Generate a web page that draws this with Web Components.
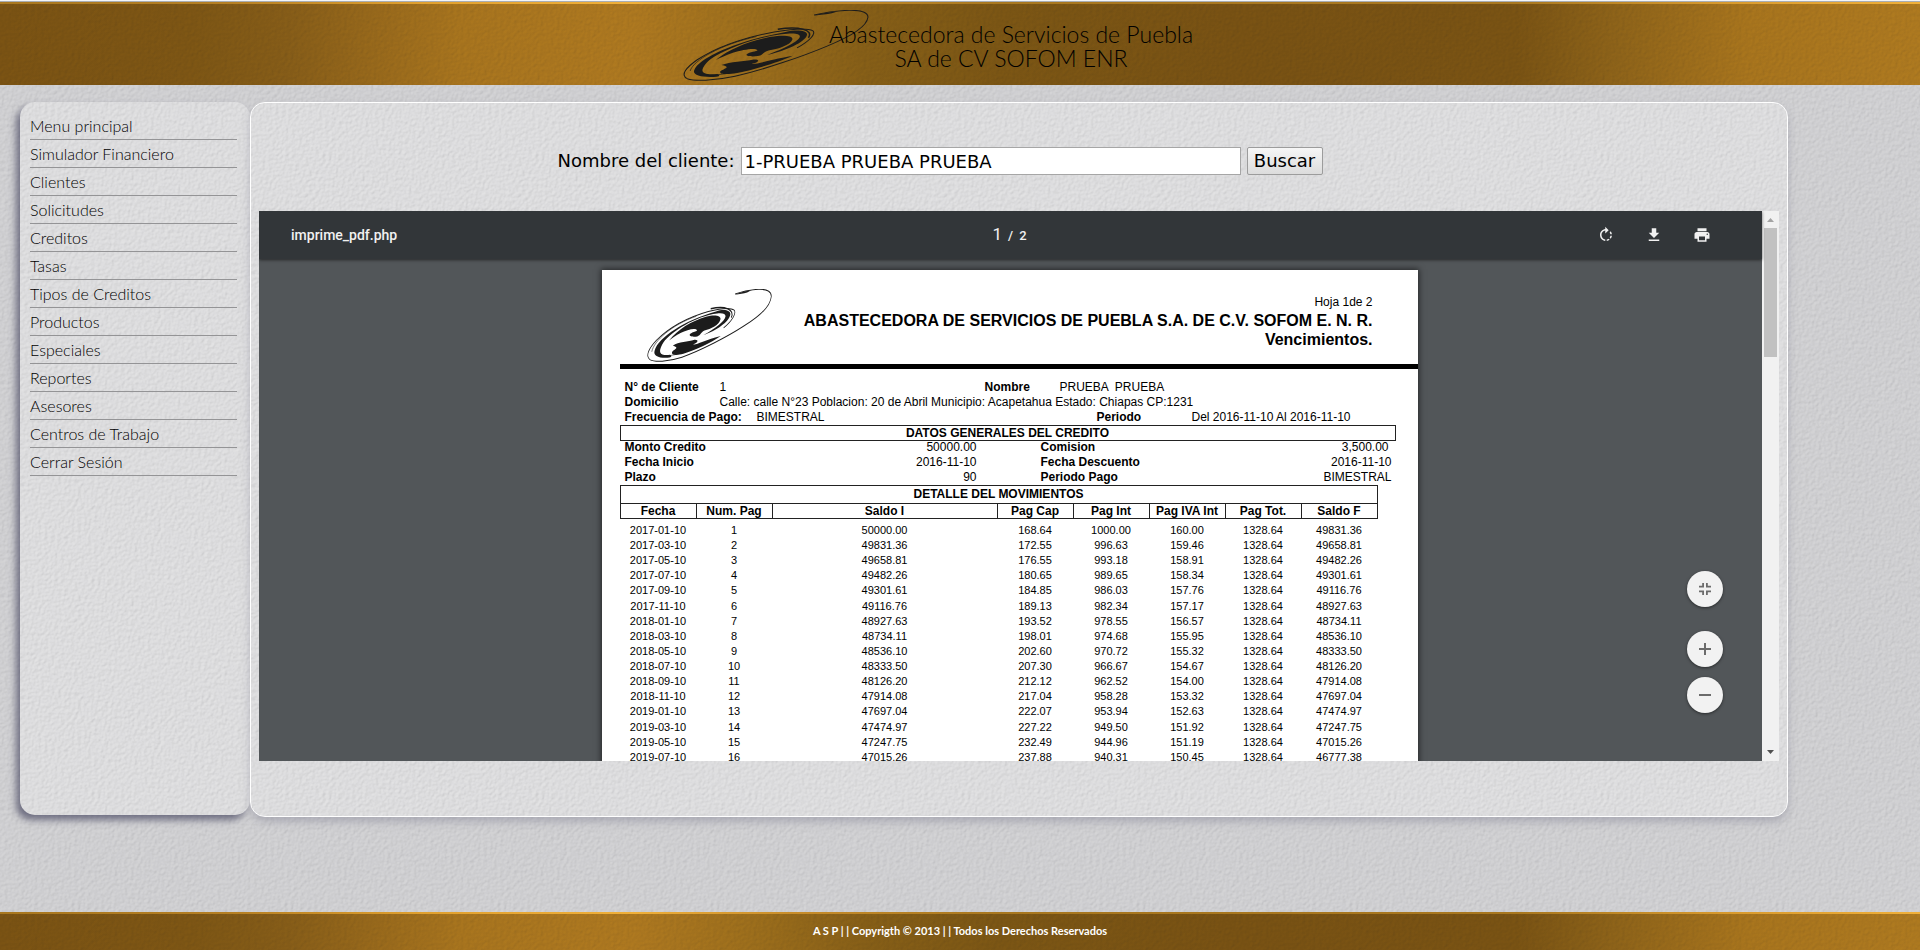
<!DOCTYPE html>
<html lang="es">
<head>
<meta charset="utf-8">
<title>Abastecedora de Servicios de Puebla</title>
<style>
  html {
    --texture: url("data:image/svg+xml,%3Csvg xmlns='http://www.w3.org/2000/svg' width='213' height='213'%3E%3Cfilter id='f' x='0' y='0' width='100%25' height='100%25' color-interpolation-filters='sRGB'%3E%3CfeTurbulence type='fractalNoise' baseFrequency='.3' numOctaves='3' seed='4' stitchTiles='stitch'/%3E%3CfeDiffuseLighting surfaceScale='1.2' lighting-color='%23fff'%3E%3CfeDistantLight azimuth='225' elevation='50'/%3E%3C/feDiffuseLighting%3E%3CfeColorMatrix values='0 0 0 0 .05 0 0 0 0 .05 0 0 0 0 .1 -.16 0 0 0 .15'/%3E%3C/filter%3E%3Crect width='213' height='213' filter='url(%23f)'/%3E%3C/svg%3E");
    --gold: linear-gradient(90deg, #7c5413 0%, #7f5714 10%, #885e18 15%, #98691b 19%, #aa761e 24%, #b07a20 33%, #9f701c 39%, #886017 45%, #7d5714 52%, #7a5313 64%, #7b5413 79%, #8f6419 84%, #aa761d 91%, #b07b20 100%);
    --gold-line: linear-gradient(90deg, #a8771f 0%, #b57f23 12%, #e0a02f 22%, #f0b03a 33%, #c98e2b 41%, #a8771f 52%, #a8771f 79%, #d89a2e 90%, #f0b03a 100%);
    --gothic: Lato, "Century Gothic", sans-serif;
  }
  body {
    margin: 0;
    min-height: 100vh;
    display: flex;
    flex-direction: column;
    background: var(--texture) #d4d4d6;
    font-family: var(--gothic);
    color: #000;
  }
  .layout { display: flex; align-items: flex-start; padding: 17px 132px 17px 20px; }
  side-menu { flex: 0 0 230px; }
  main { flex: 1; min-width: 0; }
</style>
</head>
<body>
<app-header>
  <span slot="title">Abastecedora de Servicios de Puebla<br>SA de CV SOFOM ENR</span>
</app-header>
<div class="layout">
  <side-menu>
    <a href="#">Menu principal</a>
    <a href="#">Simulador Financiero</a>
    <a href="#">Clientes</a>
    <a href="#">Solicitudes</a>
    <a href="#">Creditos</a>
    <a href="#">Tasas</a>
    <a href="#">Tipos de Creditos</a>
    <a href="#">Productos</a>
    <a href="#">Especiales</a>
    <a href="#">Reportes</a>
    <a href="#">Asesores</a>
    <a href="#">Centros de Trabajo</a>
    <a href="#">Cerrar Sesión</a>
  </side-menu>
  <main>
    <content-panel>
      <client-search></client-search>
      <pdf-viewer><credit-report></credit-report></pdf-viewer>
    </content-panel>
  </main>
</div>
<app-footer>A S P | | Copyrigth © 2013 | | Todos los Derechos Reservados</app-footer>

<script>
const define = (name, html, setup) => {
  const tpl = document.createElement('template');
  tpl.innerHTML = html;
  customElements.define(name, class extends HTMLElement {
    constructor() {
      super();
      this.attachShadow({ mode: 'open' }).append(tpl.content.cloneNode(true));
      if (setup) setup(this.shadowRoot);
    }
  });
};

define('swirl-logo', `
<style>:host{display:block} svg{display:block;width:100%;height:100%}</style>
<svg viewBox="64 28 522 214" preserveAspectRatio="none" aria-hidden="true" fill="#1c1c1c">
  <path d="M432 43C460 36 490 30 530 29C566 28 584 36 583 50C580 78 530 110 470 136C400 168 290 208 210 228C150 242 96 243 76 235C56 224 72 202 104 178C158 140 240 110 320 94C370 85 414 82 428 90C438 98 422 120 384 142" fill="none" stroke="#1c1c1c" stroke-width="3"/>
  <path d="M431 45C452 42 466 42 482 38L500 32C474 35 450 38 431 45Z"/>
  <path d="M352 94C384 86 414 90 412 103C408 124 350 152 300 163C346 146 390 122 392 108C392 98 374 97 340 101C250 114 150 160 128 190C108 216 120 224 160 221C168 224 168 228 158 229C116 232 88 224 96 208C112 170 220 120 352 94Z"/>
  <path d="M330 86C390 76 432 88 416 112" fill="none" stroke="#1c1c1c" stroke-width="4"/>
  <path d="M156 179C196 144 250 122 310 109C342 103 374 104 371 117C366 134 330 146 304 150C286 156 290 164 274 167C258 169 238 168 243 161C250 154 272 153 273 149C268 141 232 147 204 157C186 164 168 172 156 179Z"/>
  <path d="M172 194C196 183 236 183 262 177C282 176 278 186 256 190C270 193 298 180 372 166C332 186 262 208 216 218C192 222 168 224 168 214C170 208 190 204 186 199C182 195 176 196 172 194Z"/>
  <path d="M130 226C200 222 270 202 330 180" fill="none" stroke="#1c1c1c" stroke-width="2"/>
  <path d="M84 212C92 180 170 132 270 108" fill="none" stroke="#1c1c1c" stroke-width="2"/>
</svg>`);

define('app-header', `
<style>
  :host{display:block;border-top:1px solid #f4f5f7}
  header{display:flex;justify-content:center;box-sizing:border-box;height:84px;border-top:1px solid #a9adb3;
    padding:8px 44px 0 0;background:var(--gold-line) 0 0/100% 2px no-repeat,var(--texture),var(--gold)}
  swirl-logo{width:186px;height:71px;margin-right:-40px}
  h1{margin:0;padding-top:12px;font:300 23px/24px var(--gothic);text-align:center;position:relative;white-space:nowrap}
</style>
<header><swirl-logo></swirl-logo><h1><slot name="title"></slot></h1></header>`);

define('side-menu', `
<style>
  :host{display:block}
  nav{box-sizing:border-box;min-height:713px;padding:10px;border-radius:15px;background:var(--texture) #e2e2e3;
    box-shadow:-4px 5px 7px #505068c0}
  ::slotted(a){display:block;margin-right:3px;height:27px;border-bottom:1px solid #949496;
    font:300 16px/27px var(--gothic);color:#000;text-decoration:none}
</style>
<nav><slot></slot></nav>`);

define('content-panel', `
<style>
  :host{display:block;box-sizing:border-box;padding:0 8px 55px;border:1px solid #fff;border-radius:15px;
    background:var(--texture) padding-box #e2e2e3;box-shadow:0 5px 10px -1px #8a8a9a90}
</style>
<slot></slot>`);

define('client-search', `
<style>
  :host{display:block}
  form{display:flex;justify-content:center;gap:6px;padding:44px 158px 36px 0;font:18px/28px "DejaVu Sans",Verdana,sans-serif}
  input,button{box-sizing:border-box;height:28px;font:inherit;line-height:24px;color:#000}
  input{width:500px;padding:0 3px;border:1px solid #a6a6a6;background:#fff}
  button{width:76px;padding:0;border:1px solid #9c9c9c;border-radius:2px;background:linear-gradient(#f6f6f6,#dcdcdc)}
</style>
<form onsubmit="return false">
  <label for="cliente">Nombre del cliente:</label>
  <input id="cliente" type="text" value="1-PRUEBA PRUEBA PRUEBA">
  <button type="submit">Buscar</button>
</form>`);

define('pdf-viewer', `
<style>
  :host{display:flex;height:550px;overflow:hidden}
  .view{flex:1;display:flex;flex-direction:column;min-width:0;background:#525659;position:relative}
  .bar{box-sizing:border-box;flex:0 0 48px;display:grid;grid-template-columns:1fr auto 1fr;align-items:center;
    padding:0 34px 0 32px;background:#323639;color:#f1f1f1;font:500 14px/20px Roboto,sans-serif;
    box-shadow:0 1px 3px #0000008c;z-index:1}
  .page{display:flex;align-items:baseline;gap:6px;font-size:13px}
  .page b{font-weight:400;font-size:17px}
  .tools{display:flex;justify-content:flex-end;gap:16px;padding-right:10px}
  .tools button{width:32px;height:32px;padding:7px;border:0;background:none;color:#f1f1f1}
  svg{display:block;width:18px;height:18px;fill:currentColor}
  .canvas{flex:1;min-height:0;overflow:hidden;display:flex;justify-content:center;align-items:flex-start;padding:11px 2px 0 0}
  .zoom{position:absolute;right:39px;bottom:48px;display:flex;flex-direction:column;gap:10px}
  .zoom button{width:36px;height:36px;padding:9px;border:0;border-radius:50%;background:#f2f2f2;color:#6c6c6c;
    box-shadow:0 1px 3px #00000080}
  .zoom .fit{margin-bottom:14px}
  .scroll{flex:0 0 17px;display:flex;flex-direction:column;align-items:center;background:#f1f1f1}
  .scroll svg{width:17px;height:17px}
  .thumb{width:13px;height:129px;background:#c1c1c1;margin-bottom:auto}
</style>
<div class="view">
  <div class="bar">
    <span>imprime_pdf.php</span>
    <span class="page"><b>1</b><span>/</span><span>2</span></span>
    <span class="tools">
      <button aria-label="Girar"><svg viewBox="0 0 24 24"><path d="M15.55 5.55L11 1v3.07C7.06 4.56 4 7.92 4 12s3.05 7.44 7 7.93v-2.02c-2.84-.48-5-2.94-5-5.91s2.16-5.43 5-5.91V10l4.550-4.450zM19.930 11c-.17-1.390-.72-2.730-1.620-3.890l-1.420 1.420c.54.75.88 1.600 1.020 2.470h2.020zM13 17.900v2.020c1.390-.17 2.740-.71 3.900-1.610l-1.440-1.440c-.75.54-1.590.89-2.460 1.030zm3.890-2.420l1.420 1.410c.9-1.160 1.450-2.500 1.620-3.890h-2.020c-.14.87-.48 1.720-1.020 2.480z"/></svg></button>
      <button aria-label="Descargar"><svg viewBox="0 0 24 24"><path d="M19 9h-4V3H9v6H5l7 7 7-7zM5 18v2h14v-2H5z"/></svg></button>
      <button aria-label="Imprimir"><svg viewBox="0 0 24 24"><path d="M19 8H5c-1.660 0-3 1.340-3 3v6h4v4h12v-4h4v-6c0-1.660-1.340-3-3-3zm-3 11H8v-5h8v5zm3-7c-.55 0-1-.45-1-1s.45-1 1-1 1 .45 1 1-.45 1-1 1zm-1-9H6v4h12V3z"/></svg></button>
    </span>
  </div>
  <div class="canvas"><slot></slot></div>
  <div class="zoom">
    <button class="fit" aria-label="Ajustar"><svg viewBox="0 0 18 18"><path d="M3 10.500h5V15H6.200v-2.700H3zM6.200 3H8v4.500H3V5.700h3.200zM10 10.500h5v1.800h-3.200V15H10zM11.800 5.700H15v1.800h-5V3h1.800z"/></svg></button>
    <button aria-label="Acercar"><svg viewBox="0 0 18 18"><path d="M8 3h2v5h5v2h-5v5H8v-5H3V8h5z"/></svg></button>
    <button aria-label="Alejar"><svg viewBox="0 0 18 18"><path d="M3 8h12v2H3z"/></svg></button>
  </div>
</div>
<div class="scroll">
  <svg viewBox="0 0 17 17" color="#a3a3a3"><path d="M5 11l3.500-4 3.500 4z"/></svg>
  <div class="thumb"></div>
  <svg viewBox="0 0 17 17" color="#505050"><path d="M5 6h7l-3.500 4z"/></svg>
</div>`);

const rows = `2017-01-10 1 50000.00 168.64 1000.00 160.00 1328.64 49831.36
2017-03-10 2 49831.36 172.55 996.63 159.46 1328.64 49658.81
2017-05-10 3 49658.81 176.55 993.18 158.91 1328.64 49482.26
2017-07-10 4 49482.26 180.65 989.65 158.34 1328.64 49301.61
2017-09-10 5 49301.61 184.85 986.03 157.76 1328.64 49116.76
2017-11-10 6 49116.76 189.13 982.34 157.17 1328.64 48927.63
2018-01-10 7 48927.63 193.52 978.55 156.57 1328.64 48734.11
2018-03-10 8 48734.11 198.01 974.68 155.95 1328.64 48536.10
2018-05-10 9 48536.10 202.60 970.72 155.32 1328.64 48333.50
2018-07-10 10 48333.50 207.30 966.67 154.67 1328.64 48126.20
2018-09-10 11 48126.20 212.12 962.52 154.00 1328.64 47914.08
2018-11-10 12 47914.08 217.04 958.28 153.32 1328.64 47697.04
2019-01-10 13 47697.04 222.07 953.94 152.63 1328.64 47474.97
2019-03-10 14 47474.97 227.22 949.50 151.92 1328.64 47247.75
2019-05-10 15 47247.75 232.49 944.96 151.19 1328.64 47015.26
2019-07-10 16 47015.26 237.88 940.31 150.45 1328.64 46777.38`;

define('credit-report', `
<style>
  :host{display:block;box-sizing:border-box;width:816px;padding:17px 0 0 18px;background:#fff;
    box-shadow:0 0 6px 1px #00000090;font:12px/15px "Liberation Sans",Arial,sans-serif}
  header{display:flex;justify-content:space-between;height:75px;padding:2px 45px 0 27px;border-bottom:5px solid #000}
  swirl-logo{width:125px;height:73px}
  .head{text-align:right;padding-top:6px}
  h2{margin:0;font-size:16px;line-height:19px}
  h2:first-of-type{padding-top:1px}
  dl{display:flex;margin:0;padding-left:5px}
  dl.first{padding-top:11px}
  dt{font-weight:bold} dd{margin:0}
  .w95{width:95px}.w132{width:132px}.w265{width:265px}.w340{width:340px}.w75{width:75px}
  .box{width:774px;margin:0;border:1px solid #222;font-size:12px;line-height:14px;text-align:center}
  .pairs{display:grid;grid-template-columns:115px 301px 130px 221px;margin-top:-1px}
  .pairs dd{text-align:right;padding-right:64px}
  .pairs dd.r{padding:0}
  .pairs dd.n{padding-right:3px}
  table{table-layout:fixed;width:758px;border-collapse:collapse;margin:0;font-size:11px}
  caption{box-sizing:border-box;height:18px;border:1px solid #222;border-bottom:0;font:bold 12px/17px "Liberation Sans",Arial,sans-serif}
  th{box-sizing:border-box;padding:0;height:15px;border:1px solid #222;font-size:12px;line-height:13px;white-space:nowrap}
  td{padding:0;text-align:center;height:15px;line-height:15px}
  tbody tr:nth-child(8n+6) td{height:16px}
  tbody tr:first-child td{padding-top:4px}
  .c{width:76px}
</style>
<header>
  <swirl-logo></swirl-logo>
  <div class="head">Hoja 1de 2<h2>ABASTECEDORA DE SERVICIOS DE PUEBLA S.A. DE C.V. SOFOM E. N. R.</h2><h2>Vencimientos.</h2></div>
</header>
<dl class="first"><dt class="w95">N° de Cliente</dt><dd class="w265">1</dd><dt class="w75">Nombre</dt><dd>PRUEBA &nbsp;PRUEBA</dd></dl>
<dl><dt class="w95">Domicilio</dt><dd>Calle: calle N°23 Poblacion: 20 de Abril Municipio: Acapetahua Estado: Chiapas CP:1231</dd></dl>
<dl><dt class="w132">Frecuencia de Pago:</dt><dd class="w340">BIMESTRAL</dd><dt class="w95">Periodo</dt><dd>Del 2016-11-10 Al 2016-11-10</dd></dl>
<h3 class="box">DATOS GENERALES DEL CREDITO</h3>
<dl class="pairs">
  <dt>Monto Credito</dt><dd>50000.00</dd><dt>Comision</dt><dd class="n">3,500.00</dd>
  <dt>Fecha Inicio</dt><dd>2016-11-10</dd><dt>Fecha Descuento</dt><dd class="r">2016-11-10</dd>
  <dt>Plazo</dt><dd>90</dd><dt>Periodo Pago</dt><dd class="r">BIMESTRAL</dd>
</dl>
<table>
  <caption>DETALLE DEL MOVIMIENTOS</caption>
  <thead><tr><th class="c">Fecha</th><th class="c">Num. Pag</th><th>Saldo I</th><th class="c">Pag Cap</th><th class="c">Pag Int</th><th class="c">Pag IVA Int</th><th class="c">Pag Tot.</th><th class="c">Saldo F</th></tr></thead>
  <tbody></tbody>
</table>`, root => {
  root.querySelector('tbody').innerHTML = rows.split('\n')
    .map(r => '<tr>' + r.split(' ').map(c => `<td>${c}</td>`).join('') + '</tr>').join('');
});

define('app-footer', `
<style>
  :host{display:block;margin-top:auto}
  footer{box-sizing:border-box;height:38px;padding-top:9px;text-align:center;color:#fff;
    font:bold 11px/20px var(--gothic);
    background:var(--gold-line) 0 0/100% 2px no-repeat,var(--texture),var(--gold)}
</style>
<footer><slot></slot></footer>`);
</script>
</body>
</html>
